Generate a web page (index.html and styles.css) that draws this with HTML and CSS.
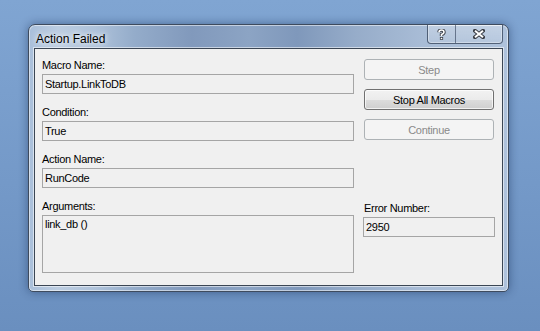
FILE: index.html
```html
<!DOCTYPE html>
<html lang="en">
<head>
    <meta charset="UTF-8">
    <meta name="viewport" content="width=device-width, initial-scale=1.0">
    <title>Action Failed</title>
    <link rel="stylesheet" href="styles.css">
</head>
<body>
    <div class="desktop">
        <div class="window">
            <!-- Title bar -->
            <div class="titlebar">
                <span class="title">Action Failed</span>
                <div class="caption-buttons">
                    <div class="cap cap-help">
                        <svg width="9" height="11" viewBox="0 0 9 11">
                            <path d="M2 3.3 Q2 1 4.5 1 Q7 1 7 3.2 Q7 4.6 4.5 5.6 V7" fill="none" stroke="#3c4048" stroke-width="3.4"/>
                            <rect x="2.9" y="8" width="3.2" height="2.8" fill="#3c4048"/>
                            <path d="M2 3.3 Q2 1 4.5 1 Q7 1 7 3.2 Q7 4.6 4.5 5.6 V7" fill="none" stroke="#fff" stroke-width="1.6"/>
                            <rect x="3.7" y="8.8" width="1.6" height="1.3" fill="#fff"/>
                        </svg>
                    </div>
                    <div class="cap cap-close">
                        <svg width="12" height="10" viewBox="0 0 12 10">
                            <path d="M2 1.8 L10 8.2 M10 1.8 L2 8.2" stroke="#3c4048" stroke-width="4" stroke-linecap="square"/>
                            <path d="M2 1.8 L10 8.2 M10 1.8 L2 8.2" stroke="#fff" stroke-width="2"/>
                        </svg>
                    </div>
                </div>
            </div>

            <!-- Dialog body -->
            <div class="client">
                <div class="fields">
                    <div class="form-group">
                        <label>Macro Name:</label>
                        <div class="field">Startup.LinkToDB</div>
                    </div>
                    <div class="form-group">
                        <label>Condition:</label>
                        <div class="field">True</div>
                    </div>
                    <div class="form-group">
                        <label>Action Name:</label>
                        <div class="field">RunCode</div>
                    </div>
                    <div class="form-group">
                        <label>Arguments:</label>
                        <div class="field field-multi">link_db ()</div>
                    </div>
                </div>

                <div class="actions">
                    <button class="btn" disabled>Step</button>
                    <button class="btn">Stop All Macros</button>
                    <button class="btn" disabled>Continue</button>

                    <div class="form-group error-group">
                        <label>Error Number:</label>
                        <div class="field">2950</div>
                    </div>
                </div>
            </div>
        </div>
    </div>
</body>
</html>
```

FILE: styles.css
```css
* {
    box-sizing: border-box;
}
html, body {
    height: 100%;
}
body {
    margin: 0;
    font-family: "Liberation Sans", Arial, sans-serif;
    font-size: 11px;
    letter-spacing: -0.3px;
    color: #000;
    background: linear-gradient(180deg, #80a5d2 0%, #7499c8 55%, #6a8fbf 100%);
}
.desktop {
    padding: 24px 0 0 28px;
}
.window {
    width: 481px;
    height: 268px;
    display: flex;
    flex-direction: column;
    padding: 0 5px 5px;
    border: 1px solid #3e4b5e;
    border-radius: 7px 7px 5px 5px;
    background: linear-gradient(90deg, #a9bfda 0%, #bccde1 6%, #aec2da 14%, #94acca 22%, #8199bc 34%, #8ca4c4 46%, #7f98bb 56%, #96acc9 68%, #a8bcd6 82%, #abbfd8 92%, #aec2dc 100%);
    box-shadow: inset 0 0 0 1px rgba(255, 255, 255, 0.5), 0 0 10px rgba(10, 30, 70, 0.45);
}

/* Title bar */
.titlebar {
    height: 26px;
    display: flex;
    align-items: flex-start;
}
.title {
    margin-top: 6px;
    padding-left: 2px;
    font-size: 12px;
    line-height: 16px;
    letter-spacing: 0;
    text-shadow: 0 0 5px #fff, 0 0 9px rgba(255, 255, 255, 0.8);
}
.caption-buttons {
    margin-left: auto;
    display: flex;
    height: 19px;
    border: 1px solid rgba(45, 60, 85, 0.75);
    border-top: none;
    border-radius: 0 0 4px 4px;
    background: linear-gradient(180deg, rgba(255, 255, 255, 0.28), rgba(255, 255, 255, 0.12));
    box-shadow: inset 0 0 0 1px rgba(255, 255, 255, 0.35);
}
.cap {
    display: flex;
    align-items: center;
    justify-content: center;
    height: 100%;
}
.cap-help {
    width: 27px;
}
.cap-close {
    width: 47px;
    border-left: 1px solid rgba(45, 60, 85, 0.6);
}

/* Client area */
.client {
    flex: 1;
    display: grid;
    grid-template-columns: 312px 130px;
    column-gap: 10px;
    align-content: start;
    padding: 10px 7px 0;
    background: #f0f0f0;
    border: 1px solid #3b4654;
    box-shadow: 0 0 0 1px rgba(255, 255, 255, 0.55);
}
.form-group {
    margin-bottom: 12px;
}
.form-group label {
    display: block;
    line-height: 13px;
    margin-bottom: 2px;
}
.field {
    height: 20px;
    padding: 0 2px;
    line-height: 18px;
    border: 1px solid #a5a5a5;
    background: #f0f0f0;
    white-space: nowrap;
}
.field-multi {
    height: 58px;
    padding-top: 2px;
    line-height: 13px;
}

/* Buttons */
.btn {
    display: block;
    width: 130px;
    height: 21px;
    margin: 0 0 9px;
    padding: 2px 0 0;
    font: inherit;
    line-height: 17px;
    letter-spacing: -0.3px;
    text-align: center;
    color: #000;
    border: 1px solid #707070;
    border-radius: 3px;
    background: linear-gradient(180deg, #f2f2f2 0%, #ebebeb 50%, #dddddd 51%, #cfcfcf 100%);
    box-shadow: inset 0 0 0 1px rgba(255, 255, 255, 0.7);
}
.btn:disabled {
    color: #8a8a8a;
    border-color: #adb2b5;
    background: #f4f4f4;
    box-shadow: none;
}
.error-group {
    margin-top: 62px;
}
.error-group .field {
    margin: 0 -1px;
}
```
